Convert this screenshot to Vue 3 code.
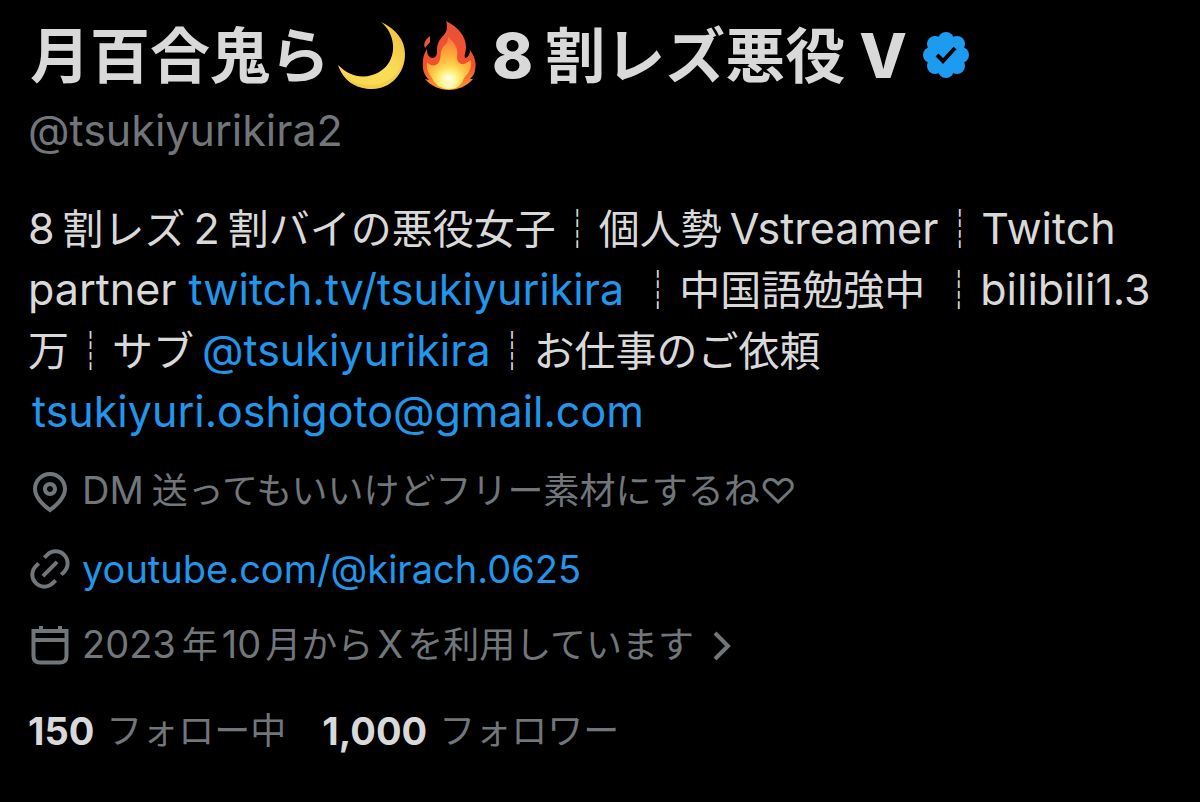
<script setup>
const followStats = [
  { count: '150', label: 'フォロー中' },
  { count: '1,000', label: 'フォロワー' },
]
</script>

<template>
  <main class="profile">
    <header class="identity">
      <h1 class="name">
        <span>月百合鬼ら</span>
        <svg class="emoji moon" viewBox="0 0 72 72" role="img" aria-label="三日月">
          <defs>
            <linearGradient id="moonFill" x1="0" y1="1" x2="1" y2="0">
              <stop offset="0" stop-color="#f9d84c" />
              <stop offset="0.55" stop-color="#fbdc57" />
              <stop offset="1" stop-color="#e9b93c" />
            </linearGradient>
          </defs>
          <path d="M45 2C60 9 69 20 69 34C69 54 54 69 36 69C19 69 7 60 2 45C12 55 24 59 36 55C50 51 58 39 57 25C56 15 52 8 45 2Z" fill="url(#moonFill)" />
          <path d="M4 49C10 62 22 69 36 69C54 69 69 54 69 34C67 50 55 64 36 65C22 66 11 60 4 49Z" fill="#e8b437" opacity="0.35" />
        </svg>
        <svg class="emoji fire" viewBox="0 0 60 72" role="img" aria-label="炎">
          <defs>
            <linearGradient id="fireOuter" x1="0" y1="0" x2="0" y2="1">
              <stop offset="0" stop-color="#e9513a" />
              <stop offset="0.65" stop-color="#f4502c" />
              <stop offset="1" stop-color="#fb9a32" />
            </linearGradient>
            <radialGradient id="fireInner" cx="0.5" cy="0.9" r="0.85">
              <stop offset="0" stop-color="#ffffe0" />
              <stop offset="0.25" stop-color="#ffee66" />
              <stop offset="0.6" stop-color="#fdb53c" />
              <stop offset="1" stop-color="#fa7c38" />
            </radialGradient>
            <radialGradient id="fireCore">
              <stop offset="0" stop-color="#fffff0" />
              <stop offset="1" stop-color="#fff27a" stop-opacity="0" />
            </radialGradient>
          </defs>
          <path d="M10 16L10 22L5 28C3 24 5 20 10 16Z" fill="#e9573f" />
          <path d="M26 1C38 7 46 16 46 27C46 32 44 35 45 38C48 38 50 34 50 30C54 36 57 42 55 50C55 53 53 56 50 59L53 59C47 66 38 70 29 70C20 70 11 66 5 59L9 60C4 55 2 49 3 41C3 36 5 32 7 29C7 33 8 37 12 38C16 38 17 35 17 31C17 23 19 20 24 15C27 11 28 7 26 1Z" fill="url(#fireOuter)" />
          <path d="M28 17C34 22 39 28 37 37C37 43 42 46 46 43L51 40C52 48 49 53 44 58C41 66 36 69 29 69C21 69 15 65 12 58C8 53 6 48 7 42C10 46 16 47 19 42C22 37 19 31 24 26C27 23 28 21 28 17Z" fill="url(#fireInner)" />
          <ellipse cx="29" cy="58" rx="15" ry="12" fill="url(#fireCore)" />
        </svg>
        <span><span class="wide eight">8</span>割レズ悪役<span class="wide vee">V</span></span>
        <svg class="badge" viewBox="0 0 46 46" role="img" aria-label="認証済みアカウント">
          <g fill="#1d9bf0">
            <circle cx="23" cy="23" r="18" />
            <circle cx="23" cy="8" r="8" />
            <circle cx="34" cy="12" r="8" />
            <circle cx="38" cy="23" r="8" />
            <circle cx="34" cy="34" r="8" />
            <circle cx="23" cy="38" r="8" />
            <circle cx="12" cy="34" r="8" />
            <circle cx="8" cy="23" r="8" />
            <circle cx="12" cy="12" r="8" />
          </g>
          <path d="M14 23L20 29L32 16" fill="none" stroke="#000" stroke-width="4" />
        </svg>
      </h1>
      <p class="handle">@tsukiyurikira2</p>
    </header>

    <p class="bio">
      <span class="latin lead">8</span>割レズ<span class="latin inset">2</span>割バイの悪役女子<span class="sep">┊</span>個人勢<span class="latin before">Vstreamer</span><span class="sep">┊</span><span class="latin">Twitch</span><br />
      <span class="latin">partner <a href="#twitch">twitch.tv/tsukiyurikira</a>&nbsp;</span><span class="sep">┊</span>中国語勉強中<span class="latin">&nbsp;</span><span class="sep">┊</span><span class="latin">bilibili1.3</span><br />
      万<span class="sep">┊</span>サブ<a class="latin before" href="#sub">@tsukiyurikira</a><span class="sep">┊</span>お仕事のご依頼<br />
      <a class="latin mail" href="mailto:tsukiyuri.oshigoto@gmail.com">tsukiyuri.oshigoto@gmail.com</a>
    </p>

    <ul class="meta">
      <li>
        <svg class="icon" viewBox="0 0 24 24" aria-hidden="true">
          <path fill="currentColor" d="M12 7c-1.930 0-3.500 1.570-3.500 3.500S10.070 14 12 14s3.500-1.570 3.500-3.500S13.930 7 12 7zm0 5c-.827 0-1.500-.673-1.500-1.500S11.173 9 12 9s1.500.673 1.500 1.500S12.827 12 12 12zm0-10c-4.687 0-8.500 3.813-8.500 8.500 0 5.967 7.621 11.116 7.945 11.332l.555.37.555-.37c.324-.216 7.945-5.365 7.945-11.332C20.500 5.813 16.687 2 12 2zm0 17.770c-1.665-1.241-6.500-5.196-6.500-9.270C5.500 6.916 8.416 4 12 4s6.500 2.916 6.500 6.500c0 4.073-4.835 8.028-6.500 9.270z" />
        </svg>
        <span><span class="latin lead">DM</span>送ってもいいけどフリー素材にするね♡</span>
      </li>
      <li>
        <svg class="icon" viewBox="0 0 24 24" aria-hidden="true">
          <path fill="currentColor" d="M18.360 5.640c-1.950-1.960-5.110-1.960-7.070 0L9.880 7.050 8.460 5.640l1.420-1.420c2.730-2.730 7.160-2.730 9.900 0 2.730 2.740 2.730 7.170 0 9.900l-1.420 1.420-1.410-1.420 1.410-1.410c1.960-1.960 1.960-5.120 0-7.070zm-2.120 3.530l-7.070 7.070-1.410-1.410 7.070-7.070 1.410 1.410zm-12.020.71l1.420-1.420 1.410 1.420-1.410 1.410c-1.960 1.960-1.960 5.120 0 7.070 1.950 1.960 5.110 1.960 7.070 0l1.410-1.410 1.420 1.410-1.420 1.420c-2.730 2.730-7.160 2.730-9.900 0-2.730-2.740-2.730-7.170 0-9.900z" />
        </svg>
        <a class="latin" href="#youtube">youtube.com/@kirach.0625</a>
      </li>
      <li>
        <svg class="icon" viewBox="0 0 48 48" aria-hidden="true">
          <path d="M7.500 9H40.500V34Q40.500 40.500 34 40.500H14Q7.500 40.500 7.500 34ZM7.500 18H40.500M15 9V4M34 9V4" fill="none" stroke="currentColor" stroke-width="4" />
        </svg>
        <span><span class="latin after">2023</span>年<span class="latin inset">10</span>月から<span class="latin inset">X</span>を利用しています</span>
        <svg class="chevron" viewBox="0 0 20 30" aria-hidden="true">
          <path d="M3 2L16 15L3 28" fill="none" stroke="currentColor" stroke-width="4" />
        </svg>
      </li>
    </ul>

    <nav class="stats" aria-label="フォロー">
      <a v-for="stat in followStats" :key="stat.label" href="#follow"><strong>{{ stat.count }}</strong><span>{{ stat.label }}</span></a>
    </nav>
  </main>
</template>

<style>
body {
  margin: 0;
  background: #000;
}
</style>

<style scoped>
.profile {
  padding: 18px 28px 40px;
  color: #d9d9d9;
  font-family: Inter, "Noto Sans CJK JP", sans-serif;
  font-size: 41px;
  line-height: 61px;
}
.name,
.handle,
.bio,
.meta {
  margin: 0;
  padding: 0;
}
.latin {
  font-size: 43px;
  line-height: 40px;
}
.name {
  display: flex;
  align-items: center;
  height: 76px;
  padding-left: 2px;
  font-size: 60px;
  font-weight: 700;
  line-height: 76px;
  white-space: nowrap;
}
.emoji {
  flex: none;
  height: 72px;
}
.moon {
  width: 72px;
  margin-left: 6px;
}
.fire {
  width: 60px;
  margin: 0 12px;
}
.wide {
  font-size: 62px;
  font-weight: 800;
}
.eight {
  margin-right: 12px;
}
.vee {
  margin-left: 14px;
}
.badge {
  flex: none;
  width: 46px;
  height: 46px;
  margin: 0 0 2px 16px;
}
.handle {
  color: #71767b;
  font-size: 43px;
  line-height: 72px;
}
.bio {
  margin-top: 33px;
  white-space: nowrap;
}
a {
  color: #2196ea;
  text-decoration: none;
}
.sep {
  margin: 0 1px;
}
.lead {
  margin-right: 8px;
}
.inset {
  margin: 0 8px;
}
.before {
  margin-left: 8px;
}
.after {
  margin-right: 6px;
}
.mail {
  margin-left: 4px;
}
.meta {
  display: flex;
  flex-direction: column;
  gap: 16px;
  margin-top: 18px;
  color: #71767b;
  font-size: 36px;
  list-style: none;
}
.meta li {
  display: flex;
  align-items: center;
  min-height: 61px;
  white-space: nowrap;
}
.meta .latin {
  font-size: 38px;
}
.icon {
  flex: none;
  width: 48px;
  height: 48px;
  margin: 0 8px 0 -2px;
}
.meta .inset {
  margin: 0 4px;
}
.chevron {
  width: 20px;
  height: 30px;
  margin-left: 18px;
}
.stats {
  display: flex;
  gap: 36px;
  margin-top: 25px;
  font-size: 36px;
}
.stats a {
  display: flex;
  gap: 12px;
  color: #71767b;
}
.stats strong {
  color: #d9d9d9;
  font-size: 38px;
  font-weight: 700;
}
</style>
